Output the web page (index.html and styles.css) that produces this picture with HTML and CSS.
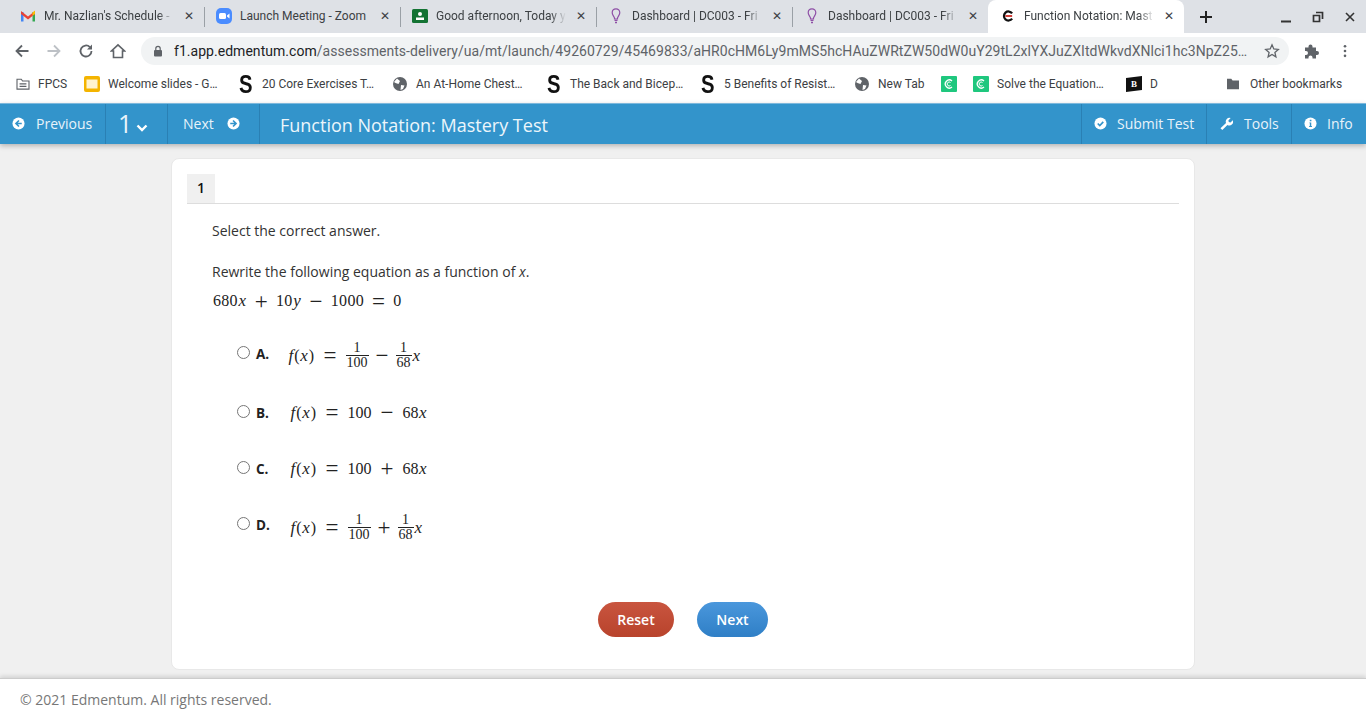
FILE: index.html
```html
<!DOCTYPE html>
<html lang="en">
<head>
<meta charset="utf-8">
<title>Function Notation: Mastery Test</title>
<link rel="stylesheet" href="styles.css">
</head>
<body>
<header class="chrome">
  <div class="tabstrip">
    <div class="tab"><svg class="fav" viewBox="0 0 16 16"><path d="M1 13.500V4h2.500v9.500z" fill="#4285f4"/><path d="M12.500 13.500V4H15v9.500z" fill="#34a853"/><path d="M1 3 8 8.500 15 3v3L8 11.500 1 6z" fill="#ea4335"/><path d="M12.500 4.500 15 2.600V6l-2.500 1.800z" fill="#fbbc04"/></svg><span class="tabtext tabtext-fade">Mr. Nazlian's Schedule -</span><span class="tabx">✕</span></div>
    <div class="tab"><svg class="fav" viewBox="0 0 16 16"><rect width="16" height="16" rx="5" fill="#4a8cff"/><rect x="3" y="5" width="7" height="6" rx="1.500" fill="#fff"/><path d="M11 7.500 13.500 5.500v5L11 8.500z" fill="#fff"/></svg><span class="tabtext">Launch Meeting - Zoom</span><span class="tabx">✕</span></div>
    <div class="tab"><svg class="fav" viewBox="0 0 16 16"><rect y="1" width="16" height="14" rx="1.500" fill="#137333"/><circle cx="8" cy="6" r="2" fill="#fff"/><rect x="4" y="9.500" width="8" height="2.500" fill="#fff"/></svg><span class="tabtext tabtext-fade">Good afternoon, Today y</span><span class="tabx">✕</span></div>
    <div class="tab"><svg class="fav" viewBox="0 0 16 16"><path d="M8 .8C5.800.8 4.200 2.500 4.200 4.700c0 2 1.300 3 2.300 5.300v1h3v-1c1-2.300 2.300-3.300 2.300-5.300C11.800 2.500 10.200.8 8 .8z" fill="none" stroke="#8e4fa6" stroke-width="1.200"/><path d="M6.500 12.300h3M7 14.500h2" stroke="#8e4fa6" stroke-width="1.300"/></svg><span class="tabtext tabtext-fade">Dashboard | DC003 - Fri</span><span class="tabx">✕</span></div>
    <div class="tab"><svg class="fav" viewBox="0 0 16 16"><path d="M8 .8C5.800.8 4.200 2.500 4.200 4.700c0 2 1.300 3 2.300 5.300v1h3v-1c1-2.300 2.300-3.300 2.300-5.300C11.800 2.500 10.200.8 8 .8z" fill="none" stroke="#8e4fa6" stroke-width="1.200"/><path d="M6.500 12.300h3M7 14.500h2" stroke="#8e4fa6" stroke-width="1.300"/></svg><span class="tabtext tabtext-fade">Dashboard | DC003 - Fri</span><span class="tabx">✕</span></div>
    <div class="tab tab-active"><svg class="fav fav-small" viewBox="0 0 16 16"><path d="M13.500 11.500A6 6 0 1 1 13.500 4.500" fill="none" stroke="#111" stroke-width="3"/><path d="M4.500 8h9" stroke="#d0342c" stroke-width="2.500"/></svg><span class="tabtext tabtext-fade">Function Notation: Mast</span><span class="tabx">✕</span></div>
    <div class="newtab"><svg viewBox="0 0 14 14" width="14" height="14"><path d="M7 1v12M1 7h12" stroke="#222" stroke-width="2"/></svg></div>
    <div class="winctl">
      <svg viewBox="0 0 12 12" width="12" height="12"><path d="M1 10.500h10" stroke="#333" stroke-width="2"/></svg>
      <svg viewBox="0 0 12 12" width="12" height="12"><path d="M4 1.500h6.500V8M1.500 4.500h6v6h-6z" fill="none" stroke="#333" stroke-width="1.700"/></svg>
      <svg viewBox="0 0 12 12" width="12" height="12"><path d="M2 2l8 8M10 2 2 10" stroke="#333" stroke-width="1.600"/></svg>
    </div>
  </div>
  <div class="toolbar">
    <svg class="tool" viewBox="0 0 16 16"><path d="M14.500 8H2.500M8 2.500 2.500 8 8 13.500" fill="none" stroke="#5f6368" stroke-width="1.800"/></svg>
    <svg class="tool" viewBox="0 0 16 16"><path d="M1.500 8h12M8 2.500 13.500 8 8 13.500" fill="none" stroke="#bdc1c6" stroke-width="1.800"/></svg>
    <svg class="tool" viewBox="0 0 16 16"><path d="M13.500 8a5.500 5.500 0 1 1-1.600-3.900" fill="none" stroke="#5f6368" stroke-width="1.800"/><path d="M14 1.500V6.500H9z" fill="#5f6368"/></svg>
    <svg class="tool" viewBox="0 0 16 16"><path d="M8 1.800 1.500 8H3.500V14.500H12.500V8H14.500z" fill="none" stroke="#5f6368" stroke-width="1.600"/></svg>
    <div class="omnibox">
      <svg class="lock" viewBox="0 0 10 12"><rect x="1" y="5" width="8" height="6.500" rx="1" fill="#5f6368"/><path d="M2.800 5V3.500a2.200 2.200 0 0 1 4.400 0V5" fill="none" stroke="#5f6368" stroke-width="1.200"/></svg>
      <span class="url"><span class="host">f1.app.edmentum.com</span>/assessments-delivery/ua/mt/launch/49260729/45469833/aHR0cHM6Ly9mMS5hcHAuZWRtZW50dW0uY29tL2xlYXJuZXItdWkvdXNlci1hc3NpZ25…</span>
      <svg class="star" viewBox="0 0 16 16"><path d="M8 1.800 9.800 6l4.500.4-3.400 3 1 4.400L8 11.500l-3.900 2.300 1-4.400-3.400-3L6.200 6z" fill="none" stroke="#5f6368" stroke-width="1.300"/></svg>
    </div>
    <svg class="ext" viewBox="0 0 16 16"><path d="M1 4.500h3.500v-1a2 2 0 1 1 4 0v1H12V8h1a2 2 0 1 1 0 4h-1v3.500H8.500v-1a2 2 0 1 0-4 0v1H1V12h1a2 2 0 1 0 0-4H1z" fill="#5f6368"/></svg>
    <svg class="menu" viewBox="0 0 4 16"><circle cx="2" cy="2.500" r="1.500" fill="#5f6368"/><circle cx="2" cy="8" r="1.500" fill="#5f6368"/><circle cx="2" cy="13.500" r="1.500" fill="#5f6368"/></svg>
  </div>
  <div class="bookmarks">
    <div class="bm bm-fpcs"><svg class="bmi-folder" viewBox="0 0 16 14"><path d="M1 1.500h5l1.500 2H15V13H1z" fill="none" stroke="#5f6368" stroke-width="1.300"/><path d="M4 6h8v1.500H4zM4 9h8v1.500H4z" fill="#5f6368"/></svg><span>FPCS</span></div>
    <div class="bm bm-slides"><svg class="bmi" viewBox="0 0 16 16"><rect width="16" height="16" rx="2" fill="#f4b400"/><rect x="2.500" y="3.500" width="11" height="9" fill="#fff3cf"/></svg><span>Welcome slides - G…</span></div>
    <div class="bm bm-s1"><span class="sglyph">S</span><span>20 Core Exercises T…</span></div>
    <div class="bm bm-g1"><svg class="bmi-globe" viewBox="0 0 14 14"><circle cx="7" cy="7" r="7" fill="#5f6368"/><path d="M4 1.500 7 4 5.500 7l-3-1-1.500-1zM8 8l3.500.5L10 12l-2.500 1z" fill="#fff"/></svg><span>An At-Home Chest…</span></div>
    <div class="bm bm-s2"><span class="sglyph">S</span><span>The Back and Bicep…</span></div>
    <div class="bm bm-s3"><span class="sglyph">S</span><span>5 Benefits of Resist…</span></div>
    <div class="bm bm-g2"><svg class="bmi-globe" viewBox="0 0 14 14"><circle cx="7" cy="7" r="7" fill="#5f6368"/><path d="M4 1.500 7 4 5.500 7l-3-1-1.500-1zM8 8l3.500.5L10 12l-2.500 1z" fill="#fff"/></svg><span>New Tab</span></div>
    <div class="bm bm-c1"><svg class="bmi" viewBox="0 0 16 16"><rect width="16" height="16" rx="1" fill="#1fc77e"/><path d="M11 5a4 4 0 1 0 0 6" fill="none" stroke="#fff" stroke-width="1.300"/><path d="M9.500 6.500a2 2 0 1 0 0 3" fill="none" stroke="#fff" stroke-width="1"/></svg></div>
    <div class="bm bm-c2"><svg class="bmi" viewBox="0 0 16 16"><rect width="16" height="16" rx="1" fill="#1fc77e"/><path d="M11 5a4 4 0 1 0 0 6" fill="none" stroke="#fff" stroke-width="1.300"/><path d="M9.500 6.500a2 2 0 1 0 0 3" fill="none" stroke="#fff" stroke-width="1"/></svg><span>Solve the Equation…</span></div>
    <div class="bm bm-d"><svg class="bmi" viewBox="0 0 16 16"><path d="M0 2 16 0V14L0 16z" fill="#111"/></svg><span class="bm-b">B</span><span>D</span></div>
    <div class="bm bm-other"><svg class="bmi-folder" viewBox="0 0 16 14"><path d="M1 1h5l1.500 2H15V13H1z" fill="#5f6368"/></svg><span>Other bookmarks</span></div>
  </div>
</header>

<nav class="appbar">
  <div class="seg seg-prev"><svg class="circ" viewBox="0 0 14 14"><circle cx="7" cy="7" r="6.500" fill="#fff"/><path d="M7.500 3.800 4.300 7l3.200 3.200M4.500 7H10.500" fill="none" stroke="#3394cb" stroke-width="1.800"/></svg><span>Previous</span></div>
  <div class="seg seg-num"><span class="bignum">1</span><svg class="chev" viewBox="0 0 12 8"><path d="M1.500 1.500 6 6l4.500-4.500" fill="none" stroke="#fff" stroke-width="2.400"/></svg></div>
  <div class="seg seg-next"><span>Next</span><svg class="circ" viewBox="0 0 14 14"><circle cx="7" cy="7" r="6.500" fill="#fff"/><path d="M6.500 3.800 9.700 7l-3.200 3.200M9.500 7H3.500" fill="none" stroke="#3394cb" stroke-width="1.800"/></svg></div>
  <h1 class="apptitle">Function Notation: Mastery Test</h1>
  <div class="seg seg-submit"><svg class="circ" viewBox="0 0 14 14"><circle cx="7" cy="7" r="6.500" fill="#fff"/><path d="M4 7l2.200 2.200L10 5.300" fill="none" stroke="#3394cb" stroke-width="1.800"/></svg><span>Submit Test</span></div>
  <div class="seg seg-tools"><svg class="circ wrench" viewBox="0 0 14 14"><path d="M.5 12 6.500 6.500A4 4 0 0 1 11.500 1.200L9 3.700l.5 1.800 1.800.5 2.500-2.500A4 4 0 0 1 8 8.500L2.500 14z" fill="#fff"/></svg><span>Tools</span></div>
  <div class="seg seg-info"><svg class="circ" viewBox="0 0 14 14"><circle cx="7" cy="7" r="6.500" fill="#fff"/><path d="M5.800 5.800h2v4h.8v1H5.500v-1h.8v-3h-.5zM6.200 3h1.800v1.700H6.200z" fill="#3394cb"/></svg><span>Info</span></div>
</nav>

<main class="stage">
  <section class="card">
    <div class="qtabs"><div class="qtab">1</div></div>
    <div class="qbody">
      <p class="prompt">Select the correct answer.</p>
      <p class="stem">Rewrite the following equation as a function of <em>x</em>.</p>
      <div class="math eq"><span>680<i>x</i></span><span class="op">+</span><span>10<i>y</i></span><span class="op">−</span><span>1000</span><span class="op">=</span><span>0</span></div>
      <div class="opts">
        <label class="opt opt-a"><span class="radio"></span><b class="letter">A.</b>
          <span class="math"><span class="fnx"><i>f</i>(<i>x</i>)</span><span class="op">=</span><span class="frac"><span class="fn">1</span><span class="fd">100</span></span><span class="op">−</span><span class="frac"><span class="fn">1</span><span class="fd">68</span></span><i class="fx">x</i></span></label>
        <label class="opt opt-b"><span class="radio"></span><b class="letter">B.</b>
          <span class="math"><span class="fnx"><i>f</i>(<i>x</i>)</span><span class="op">=</span><span>100</span><span class="op">−</span><span>68<i>x</i></span></span></label>
        <label class="opt opt-c"><span class="radio"></span><b class="letter">C.</b>
          <span class="math"><span class="fnx"><i>f</i>(<i>x</i>)</span><span class="op">=</span><span>100</span><span class="op">+</span><span>68<i>x</i></span></span></label>
        <label class="opt opt-d"><span class="radio"></span><b class="letter">D.</b>
          <span class="math"><span class="fnx"><i>f</i>(<i>x</i>)</span><span class="op">=</span><span class="frac"><span class="fn">1</span><span class="fd">100</span></span><span class="op">+</span><span class="frac"><span class="fn">1</span><span class="fd">68</span></span><i class="fx">x</i></span></label>
      </div>
      <div class="actions">
        <button class="btn btn-reset">Reset</button>
        <button class="btn btn-next">Next</button>
      </div>
    </div>
  </section>
</main>

<footer class="foot">© 2021 Edmentum. All rights reserved.</footer>
</body>
</html>
```
FILE: styles.css
```css
* { box-sizing: border-box; }
html, body { margin: 0; padding: 0; }
body { width: 1366px; height: 720px; overflow: hidden; background: #f0f0f0; font-family: "Open Sans", sans-serif; display: flex; flex-direction: column; }
svg { display: block; flex: none; }

.chrome { background: #fff; height: 103px; flex: none; font-family: Roboto, "Liberation Sans", sans-serif; }
.tabstrip { height: 33px; background: #dee1e6; display: flex; align-items: stretch; padding-left: 8px; }
.tab { width: 196px; display: flex; align-items: center; padding: 0 8px 2px 12px; position: relative; font-size: 12px; color: #3c4043; }
.tab + .tab::before { content: ""; position: absolute; left: 0; top: 7px; bottom: 6px; width: 1px; background: #9aa0a6; }
.tab-active { background: #fff; border-radius: 8px 8px 0 0; color: #3c4043; }
.tab-active::before { display: none; }
.fav { width: 16px; height: 16px; margin-right: 8px; }
.fav-small { width: 12px; height: 12px; margin: 0 10px 0 2px; }
.tabtext { flex: 1; white-space: nowrap; overflow: hidden; font-size: 12px; }
.tabtext-fade { -webkit-mask-image: linear-gradient(to right, #000 88%, transparent 100%); mask-image: linear-gradient(to right, #000 88%, transparent 100%); }
.tabx { width: 14px; margin-left: 8px; font-size: 12px; font-family: "DejaVu Sans", sans-serif; color: #3c4043; text-align: center; }
.newtab { width: 44px; display: flex; align-items: center; justify-content: center; }
.winctl { margin-left: auto; display: flex; align-items: center; gap: 20px; padding-right: 10px; }

.toolbar { height: 36px; display: flex; align-items: center; padding-left: 14px; background: #fff; }
.tool { width: 16px; height: 16px; margin-right: 16px; }
.omnibox { width: 1148px; height: 28px; margin-left: -1px; border-radius: 14px; background: #f1f3f4; display: flex; align-items: center; padding: 0 9px 0 12px; }
.lock { width: 10px; height: 12px; margin-right: 11px; }
.url { flex: 1; width: 0; white-space: nowrap; overflow: hidden; font-size: 14px; letter-spacing: .035px; color: #5f6368; }
.host { color: #202124; }
.star { width: 16px; height: 16px; margin-left: 16px; }
.ext { width: 16px; height: 16px; margin-left: 15px; }
.menu { width: 4px; height: 14px; margin-left: 23px; }

.bookmarks { height: 30px; display: flex; align-items: center; font-size: 12px; color: #3c4043; padding-left: 16px; }
.bm { display: flex; align-items: center; white-space: nowrap; }
.bmi { width: 16px; height: 16px; margin-right: 8px; }
.bmi-folder { width: 14px; height: 12px; margin-right: 8px; }
.bmi-globe { width: 14px; height: 14px; margin-right: 9px; }
.sglyph { display: block; width: 14px; font: 700 26px/1 "Liberation Sans", sans-serif; color: #111; margin-right: 8px; transform: scaleX(.78); transform-origin: left center; margin-left: -1px; padding-left: 0; }
.bm-s1 .sglyph, .bm-s2 .sglyph, .bm-s3 .sglyph { margin-right: 9px; }
.bm-fpcs { width: 68px; }
.bm-slides { width: 156px; }
.bm-s1 { width: 153px; }
.bm-g1 { width: 155px; }
.bm-s2 { width: 154px; }
.bm-s3 { width: 153px; }
.bm-g2 { width: 86px; }
.bm-c1 { width: 32px; }
.bm-c2 { width: 153px; }
.bm-d { width: 100px; position: relative; }
.bm-b { position: absolute; left: 0; width: 16px; text-align: center; color: #fff; font: 700 9px "Liberation Serif", serif; }
.bm-other .bmi-folder { margin-right: 10px; }

.appbar { height: 41px; flex: none; background: #3394cb; border-top: 1px solid #7db8dc; box-shadow: 0 2px 5px rgba(0,0,0,.25); display: flex; align-items: stretch; color: #e8f3fa; font-size: 14px; position: relative; }
.seg { display: flex; align-items: center; border-right: 1px solid #2a80b4; padding-bottom: 2px; }
.circ { width: 13px; height: 13px; }
.seg-prev { width: 106px; padding-left: 12px; gap: 11px; }
.seg-num { width: 62px; padding-left: 12px; }
.bignum { font-size: 25px; font-weight: 400; line-height: 1; }
.chev { width: 12px; height: 8px; margin: 9px 0 0 4px; }
.seg-next { width: 92px; padding-left: 15px; gap: 13px; }
.apptitle { flex: 1; margin: 0; padding: 1px 0 0 20px; font-size: 18px; font-weight: 400; line-height: 41px; color: #ecf6fb; }
.seg-submit { width: 126px; padding-left: 12px; gap: 10px; border-left: 1px solid #2a80b4; }
.seg-tools { width: 85px; padding-left: 13px; gap: 11px; }
.seg-info { width: 74px; padding-left: 12px; gap: 10px; border-right: 0; }

.stage { flex: 1; min-height: 0; display: flex; justify-content: center; padding-top: 14px; padding-bottom: 8px; background: #f0f0f0; }
.card { width: 1024px; background: #fff; border: 1px solid #e8e8e8; border-radius: 8px; padding: 15px 15px 0; display: flex; flex-direction: column; }
.qtabs { border-bottom: 1px solid #ddd; height: 30px; display: flex; flex: none; }
.qtab { width: 28px; height: 29px; background: #f0f0f0; font-size: 14px; font-weight: 600; color: #111; text-align: center; line-height: 27px; }
.qbody { padding: 17px 0 0 25px; flex: 1; display: flex; flex-direction: column; font-size: 14px; color: #333; }
.prompt { margin: 0; line-height: 20px; }
.stem { margin: 21px 0 0; line-height: 20px; }
.math { display: flex; align-items: center; font-family: "Liberation Serif", serif; font-size: 16px; color: #222; white-space: nowrap; }
.math i { font-size: 17px; margin: 0 .5px; }
.op { margin: 0 9px; font-size: 23px; line-height: 1; }
.frac + .op { margin: 0 7px; }
.eq { margin-top: 8px; height: 22px; letter-spacing: .3px; padding-left: 1px; }
.eq .op { margin: 0 8px; }
.fnx { letter-spacing: .4px; margin-left: -1px; }
.opts { margin-top: 26px; padding-left: 25px; display: flex; flex-direction: column; }
.opt { display: flex; align-items: center; height: 39px; }
.opt-b { margin-top: 20px; }
.opt-c { margin-top: 17px; }
.opt-d { margin-top: 17px; }
.opt-a .math { margin-bottom: 4px; }
.opt-b .math, .opt-c .math { margin-bottom: 8px; }
.opt-d .math { margin-bottom: 2px; }
.radio { width: 13px; height: 13px; border: 1px solid #767676; border-radius: 50%; background: #fff; margin-bottom: 10px; }
.letter { width: 33px; margin-left: 6px; font-size: 13.500px; font-weight: 700; color: #222; margin-bottom: 8px; }
.opt-b .letter, .opt-c .letter, .opt-d .letter { width: 35px; }
.frac { display: inline-flex; flex-direction: column; align-items: center; font-size: 14px; line-height: 1; }
.fn { padding: 0 1px; }
.fd { border-top: 1px solid #222; padding: 0 1px; align-self: stretch; text-align: center; }
.math .fx { margin-left: 1px; }
.actions { margin-top: 54px; display: flex; justify-content: flex-start; gap: 23px; padding-left: 386px; }
.btn { height: 35px; border: 0; border-radius: 18px; color: #fff; font: 600 14px "Open Sans", sans-serif; padding: 0; }
.btn-reset { width: 76px; background: linear-gradient(#c9553f, #b8432c); }
.btn-next { width: 71px; background: linear-gradient(#4a97dc, #2f7fc6); }

.foot { height: 42px; flex: none; background: #fff; border-top: 1px solid #ccc; box-shadow: 0 -2px 4px rgba(0,0,0,.12); padding-left: 20px; font-size: 14px; line-height: 41px; color: #777; position: relative; }
```
